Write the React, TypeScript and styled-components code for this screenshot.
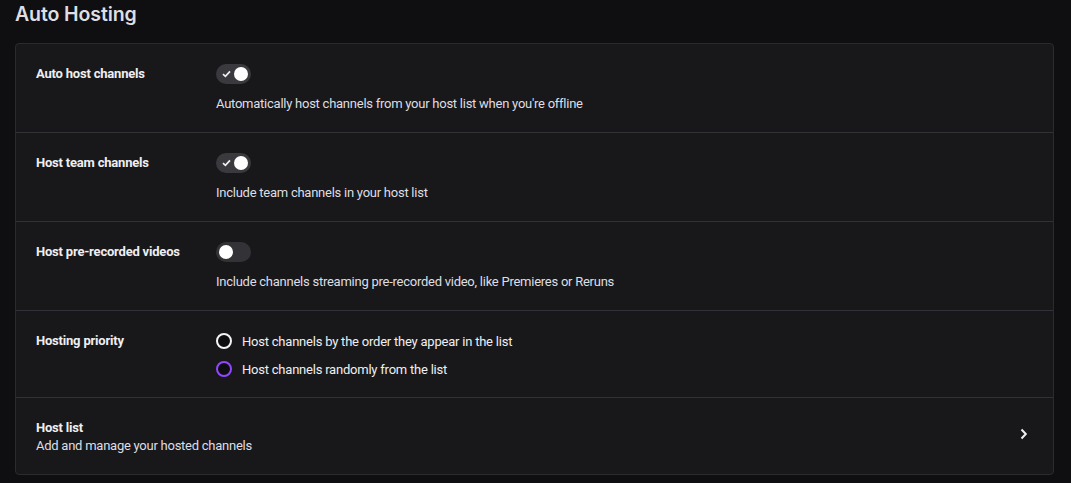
import React from "react";
import styled, { createGlobalStyle } from "styled-components";

const Global = createGlobalStyle`
  html, body { margin: 0; padding: 0; background: #0f0f11; }
  body { font-family: Roboto, "Noto Sans", sans-serif; color: #efeff1; -webkit-font-smoothing: antialiased; }
  * { box-sizing: border-box; }
`;

const Page = styled.div`
  padding: 0 17px 0 15px;
  width: 1071px;
  height: 483px;
  overflow: hidden;
`;

const Title = styled.h2`
  margin: 0;
  padding-top: 1px;
  height: 43px;
  font-family: Inter, "Noto Sans", sans-serif;
  font-size: 19.5px;
  line-height: 26px;
  font-weight: 600;
  letter-spacing: -0.1px;
  color: #dedee3;
`;

const Card = styled.div`
  background: #18181b;
  border: 1px solid #2a2a2f;
  border-radius: 4px;
`;

const Row = styled.div<{ $last?: boolean; $tight?: boolean }>`
  display: grid;
  grid-template-columns: 180px 1fr auto;
  align-items: start;
  padding: 20px 20px ${(p) => (p.$tight ? "18px" : "19px")} 20px;
  border-bottom: ${(p) => (p.$last ? "none" : "1px solid #313137")};
`;

const Label = styled.div`
  font-size: 13px;
  font-weight: 700;
  line-height: 18px;
  letter-spacing: -0.2px;
  color: #efeff1;
  padding-top: 1px;
`;

const Content = styled.div`
  display: flex;
  flex-direction: column;
  gap: 11px;
`;

const Desc = styled.div`
  font-size: 13px;
  line-height: 18px;
  letter-spacing: -0.25px;
  color: #dedee3;
`;

const Track = styled.div<{ $on: boolean }>`
  position: relative;
  width: 35px;
  height: 20px;
  border-radius: 10px;
  background: ${(p) => (p.$on ? "#3a3a3e" : "#333337")};
`;

const Knob = styled.div<{ $on: boolean }>`
  position: absolute;
  top: 3px;
  left: ${(p) => (p.$on ? "18px" : "3px")};
  width: 14px;
  height: 14px;
  border-radius: 50%;
  background: #ffffff;
`;

const Check = styled.svg`
  position: absolute;
  left: 6px;
  top: 6px;
`;

const Toggle = ({ on }: { on: boolean }) => (
  <Track $on={on}>
    {on && (
      <Check width="9" height="8" viewBox="0 0 9 8">
        <path d="M1 4.2 L3.4 6.4 L8 1.4" stroke="#efeff1" strokeWidth="1.7" fill="none" />
      </Check>
    )}
    <Knob $on={on} />
  </Track>
);

const Radios = styled.div`
  display: flex;
  flex-direction: column;
  gap: 8px;
`;

const RadioRow = styled.label`
  display: flex;
  align-items: center;
  gap: 10px;
  height: 20px;
  font-size: 13px;
  letter-spacing: -0.22px;
  color: #efeff1;
`;

const Circle = styled.span<{ $accent?: boolean }>`
  width: 16px;
  height: 16px;
  border-radius: 50%;
  border: 2px solid ${(p) => (p.$accent ? "#9147ff" : "#f4f4f6")};
  background: #0e0e10;
`;

const ListText = styled.div`
  display: flex;
  flex-direction: column;
  grid-column: 1 / 3;
`;

const Chevron = styled.svg`
  align-self: center;
  margin-right: -1px;
  margin-bottom: 5px;
`;

export default function App() {
  return (
    <>
      <Global />
      <Page>
        <Title>Auto Hosting</Title>
        <Card>
          <Row>
            <Label>Auto host channels</Label>
            <Content>
              <Toggle on />
              <Desc>Automatically host channels from your host list when you're offline</Desc>
            </Content>
          </Row>
          <Row>
            <Label>Host team channels</Label>
            <Content>
              <Toggle on />
              <Desc>Include team channels in your host list</Desc>
            </Content>
          </Row>
          <Row>
            <Label>Host pre-recorded videos</Label>
            <Content>
              <Toggle on={false} />
              <Desc>Include channels streaming pre-recorded video, like Premieres or Reruns</Desc>
            </Content>
          </Row>
          <Row $tight>
            <Label>Hosting priority</Label>
            <Radios>
              <RadioRow>
                <Circle />
                Host channels by the order they appear in the list
              </RadioRow>
              <RadioRow>
                <Circle $accent />
                Host channels randomly from the list
              </RadioRow>
            </Radios>
          </Row>
          <Row $last>
            <ListText>
              <Label>Host list</Label>
              <Desc>Add and manage your hosted channels</Desc>
            </ListText>
            <Chevron width="20" height="20" viewBox="0 0 20 20">
              <path d="M7.5 5.5 L11.8 10 L7.5 14.5" stroke="#efeff1" strokeWidth="2" fill="none" />
            </Chevron>
          </Row>
        </Card>
      </Page>
    </>
  );
}
